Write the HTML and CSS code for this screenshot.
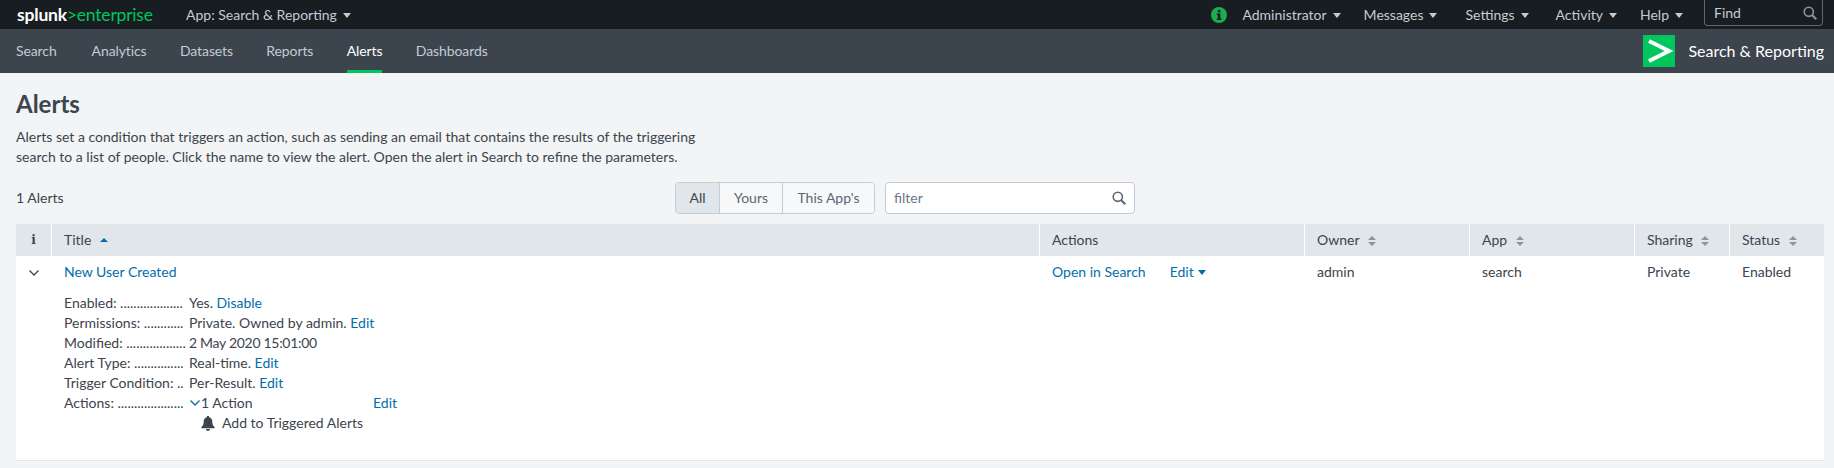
FILE: index.html
```html
<!DOCTYPE html>
<html lang="en">
<head>
    <meta charset="UTF-8">
    <title>Alerts | Splunk</title>
    <link rel="stylesheet" href="styles.css">
</head>
<body>
    <header class="topbar">
        <a class="logo" href="#">splunk<span class="logo-green">&gt;enterprise</span></a>
        <a class="app-menu caret" href="#">App: Search &amp; Reporting</a>
        <div class="topbar-right">
            <svg class="info-dot" width="16" height="16" viewBox="0 0 16 16">
                <circle cx="8" cy="8" r="8" fill="#1cad4f"/>
                <rect x="6.8" y="3" width="2.6" height="2.4" fill="#171d21"/>
                <path d="M5.8 6.6h3.6v5h1v1.4H5.8v-1.4h1v-3.6h-1z" fill="#171d21"/>
            </svg>
            <a class="sys-link admin caret" href="#">Administrator</a>
            <a class="sys-link messages caret" href="#">Messages</a>
            <a class="sys-link settings caret" href="#">Settings</a>
            <a class="sys-link activity caret" href="#">Activity</a>
            <a class="sys-link help caret" href="#">Help</a>
            <div class="find">
                <span>Find</span>
                <svg width="14" height="14" viewBox="0 0 14 14" fill="none" stroke="#8b949c" stroke-width="1.6">
                    <circle cx="5.8" cy="5.8" r="4.6"/>
                    <path d="M9.2 9.2l4 4" stroke-width="2"/>
                </svg>
            </div>
        </div>
    </header>

    <nav class="appbar">
        <a href="#">Search</a>
        <a href="#">Analytics</a>
        <a href="#">Datasets</a>
        <a href="#">Reports</a>
        <a class="active" href="#">Alerts</a>
        <a href="#">Dashboards</a>
        <div class="app-title">
            <span class="app-icon">
                <svg width="32" height="32" viewBox="0 0 32 32" fill="none" stroke="#fff" stroke-width="4">
                    <path d="M6 6l20 10L6 26"/>
                </svg>
            </span>
            <span>Search &amp; Reporting</span>
        </div>
    </nav>

    <main class="page">
        <h1>Alerts</h1>
        <p class="intro">Alerts set a condition that triggers an action, such as sending an email that contains the results of the triggering<br>search to a list of people. Click the name to view the alert. Open the alert in Search to refine the parameters.</p>

        <div class="toolbar">
            <span class="count">1 Alerts</span>
            <div class="btn-group">
                <button class="selected">All</button>
                <button>Yours</button>
                <button>This App's</button>
            </div>
            <div class="filter">
                <span>filter</span>
                <svg width="14" height="14" viewBox="0 0 14 14" fill="none" stroke="#5c6773" stroke-width="1.6">
                    <circle cx="5.8" cy="5.8" r="4.6"/>
                    <path d="M9.2 9.2l4 4" stroke-width="2"/>
                </svg>
            </div>
        </div>

        <table class="alerts">
            <colgroup>
                <col class="col-info">
                <col class="col-title">
                <col class="col-actions">
                <col class="col-owner">
                <col class="col-app">
                <col class="col-sharing">
                <col class="col-status">
            </colgroup>
            <thead>
                <tr>
                    <th class="info-head">i</th>
                    <th>Title <span class="sort-up"></span></th>
                    <th>Actions</th>
                    <th>Owner <span class="sort"></span></th>
                    <th>App <span class="sort"></span></th>
                    <th>Sharing <span class="sort"></span></th>
                    <th>Status <span class="sort"></span></th>
                </tr>
            </thead>
            <tbody>
                <tr>
                    <td class="toggle">
                        <svg width="12" height="8" viewBox="0 0 12 8" fill="none" stroke="#3c444d" stroke-width="1.3"><path d="M1.5 1.5L6 6l4.500-4.500"/></svg>
                    </td>
                    <td><a href="#">New User Created</a></td>
                    <td><a href="#">Open in Search</a><a class="edit-menu" href="#">Edit <span class="caret-blue"></span></a></td>
                    <td>admin</td>
                    <td>search</td>
                    <td>Private</td>
                    <td>Enabled</td>
                </tr>
                <tr>
                    <td></td>
                    <td colspan="6" class="details-cell">
                        <dl class="details">
                            <dt>Enabled: ...................</dt>
                            <dd>Yes. <a href="#">Disable</a></dd>
                            <dt>Permissions: ............</dt>
                            <dd>Private. Owned by admin. <a href="#">Edit</a></dd>
                            <dt>Modified: ..................</dt>
                            <dd class="modified">2 May 2020 15:01:00</dd>
                            <dt>Alert Type: ...............</dt>
                            <dd>Real-time. <a href="#">Edit</a></dd>
                            <dt>Trigger Condition: ..</dt>
                            <dd>Per-Result. <a href="#">Edit</a></dd>
                            <dt>Actions: ....................</dt>
                            <dd class="action-line">
                                <svg width="12" height="8" viewBox="0 0 12 8" fill="none" stroke="#006eaa" stroke-width="1.3"><path d="M1.5 1.5L6 6l4.500-4.500"/></svg>
                                <span class="action-count">1 Action</span>
                                <a href="#">Edit</a>
                            </dd>
                            <dd class="action-item">
                                <svg width="14" height="15" viewBox="0 0 14 15" fill="#3c444d">
                                    <path d="M7 0c.8 0 1.300.5 1.300 1.200C10.500 1.800 11.300 3.500 11.300 6c0 2.400.8 3.700 2.200 5 .4.4.2 1.200-.5 1.200H1c-.7 0-.9-.8-.5-1.200C1.900 9.700 2.700 8.400 2.700 6c0-2.500.8-4.200 3-4.800C5.700.5 6.200 0 7 0z"/>
                                    <path d="M4.800 13h4.400c-.3 1.200-1.200 2-2.200 2s-1.900-.8-2.200-2z"/>
                                </svg>
                                Add to Triggered Alerts
                            </dd>
                        </dl>
                    </td>
                </tr>
            </tbody>
        </table>
    </main>
</body>
</html>
```

FILE: styles.css
```css
body {
    font-family: Lato, "Open Sans", sans-serif;
    font-size: 14px;
    line-height: 20px;
    color: #3c444d;
    background-color: #f2f4f5;
    margin: 0;
    padding: 0;
    height: 468px;
    overflow: hidden;
}

a {
    color: #006eaa;
    text-decoration: none;
}

.topbar {
    display: flex;
    align-items: center;
    height: 29px;
    background-color: #171d21;
    padding-left: 17px;
}

.logo {
    color: #fff;
    font-size: 17.5px;
    font-weight: 700;
    width: 169px;
    letter-spacing: -0.2px;
}

.logo-green {
    color: #00c65e;
    font-weight: 400;
}

.app-menu {
    color: #c3cbd4;
}

.caret::after {
    content: "";
    display: inline-block;
    border-left: 4px solid transparent;
    border-right: 4px solid transparent;
    border-top: 5px solid #c3cbd4;
    margin-left: 6px;
    vertical-align: 2px;
}

.topbar-right {
    display: flex;
    align-items: center;
    margin-left: auto;
    height: 29px;
}

.info-dot {
    margin-right: 15px;
}

.sys-link {
    color: #c3cbd4;
}

.admin { margin-right: 23px; }
.messages { margin-right: 28px; }
.settings { margin-right: 27px; }
.activity { margin-right: 23px; }
.help { margin-right: 21px; }

.find {
    display: flex;
    align-items: center;
    justify-content: space-between;
    box-sizing: border-box;
    width: 119px;
    height: 26px;
    margin: 0 11px 3px 0;
    padding: 0 5px 0 9px;
    color: #c3cbd4;
    border: 1px solid #5c6773;
    border-top: none;
    border-radius: 0 0 4px 4px;
}

.appbar {
    display: flex;
    align-items: stretch;
    height: 44px;
    background-color: #3c444d;
    padding-left: 16px;
}

.appbar > a {
    color: #c3cbd4;
    line-height: 44px;
    letter-spacing: -0.1px;
    margin-right: 33.4px;
    height: 41px;
}

.appbar > a:first-child {
    margin-right: 35px;
}

.appbar > a.active {
    color: #fff;
    border-bottom: 3px solid #00c65e;
}

.app-title {
    display: flex;
    align-items: center;
    gap: 13px;
    margin-left: auto;
    margin-right: 10px;
    color: #fff;
    font-size: 16px;
}

.app-icon {
    display: block;
    width: 32px;
    height: 32px;
    background-color: #00c65e;
}

.page {
    padding: 0 10px 0 16px;
}

h1 {
    font-size: 24px;
    font-weight: 700;
    line-height: 30px;
    margin: 16px 0 0;
}

.intro {
    margin: 8px 0 0;
}

.toolbar {
    display: flex;
    align-items: center;
    height: 32px;
    margin-top: 15px;
}

.count {
    width: 659px;
}

.btn-group {
    display: flex;
    height: 32px;
    box-sizing: border-box;
    border: 1px solid #c3cbd4;
    border-radius: 4px;
    overflow: hidden;
}

.btn-group button {
    font: inherit;
    color: #5c6773;
    background-color: #f7f8fa;
    border: none;
    border-left: 1px solid #c3cbd4;
    padding: 0;
    width: 63px;
}

.btn-group button:first-child {
    width: 43px;
    border-left: none;
}

.btn-group button:last-child {
    width: 92px;
}

.btn-group .selected {
    color: #3c444d;
    background-color: #e1e6eb;
}

.filter {
    display: flex;
    align-items: center;
    justify-content: space-between;
    box-sizing: border-box;
    width: 250px;
    height: 32px;
    margin-left: 10px;
    padding: 0 8px;
    color: #6b7785;
    background-color: #fff;
    border: 1px solid #c3cbd4;
    border-radius: 4px;
}

.alerts {
    width: 1808px;
    margin-top: 10px;
    table-layout: fixed;
    border-collapse: separate;
    border-spacing: 0;
    background-color: #fff;
    border-bottom: 1px solid #e1e6eb;
}

.col-info { width: 35px; }
.col-title { width: 988px; }
.col-actions { width: 265px; }
.col-owner { width: 165px; }
.col-app { width: 165px; }
.col-sharing { width: 95px; }
.col-status { width: 95px; }

.alerts th {
    height: 32px;
    padding: 0 0 0 12px;
    font-weight: 400;
    text-align: left;
    background-color: #e1e6eb;
    border-left: 1px solid #fff;
}

.alerts th:first-child {
    border-left: none;
}

.alerts .info-head {
    padding: 0;
    text-align: center;
    font-family: "DejaVu Serif", serif;
    font-weight: 700;
    font-size: 12px;
}

.alerts td {
    padding: 6px 0 6px 13px;
    vertical-align: top;
}

.alerts .toggle {
    padding: 6px 0 0;
    text-align: center;
}

.sort-up {
    display: inline-block;
    border-left: 4px solid transparent;
    border-right: 4px solid transparent;
    border-bottom: 4px solid #006eaa;
    margin-left: 5px;
    vertical-align: 3px;
}

.sort {
    display: inline-block;
    width: 8px;
    margin-left: 5px;
    vertical-align: -1px;
}

.sort::before,
.sort::after {
    content: "";
    display: block;
    width: 0;
    border-left: 4px solid transparent;
    border-right: 4px solid transparent;
}

.sort::before {
    border-bottom: 4px solid #8b949c;
    margin-bottom: 2px;
}

.sort::after {
    border-top: 4px solid #8b949c;
}

.edit-menu {
    margin-left: 24px;
}

.caret-blue {
    display: inline-block;
    border-left: 4px solid transparent;
    border-right: 4px solid transparent;
    border-top: 5px solid #006eaa;
    margin-left: 1px;
    vertical-align: 2px;
}

.alerts .details-cell {
    padding: 5px 0 27px 13px;
}

.details {
    display: grid;
    grid-template-columns: 120px 1fr;
    column-gap: 5px;
    margin: 0;
}

.details dt {
    white-space: nowrap;
}

.details dd {
    margin: 0;
}

.modified {
    letter-spacing: -0.3px;
}

.action-line {
    display: flex;
    align-items: center;
}

.action-count {
    width: 172px;
}

.action-item {
    grid-column: 2;
    display: flex;
    align-items: center;
    gap: 7px;
    padding-left: 12px;
}
```
